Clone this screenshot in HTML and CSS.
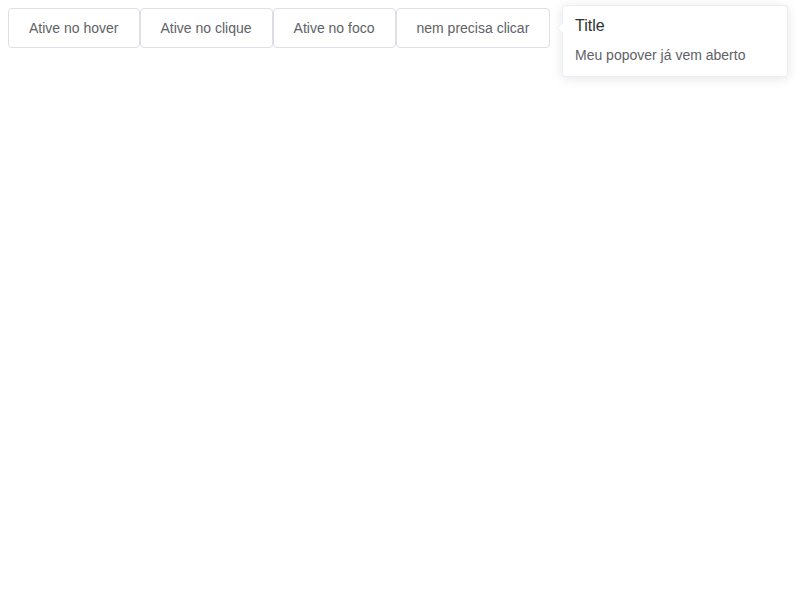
FILE: index.html
```html
<!DOCTYPE html>
<html lang="pt-BR">
<head>
<meta charset="utf-8">
<title>Popover</title>
<link rel="stylesheet" href="styles.css">
</head>
<body>
<div class="bar">
  <button class="btn">Ative no hover</button>
  <button class="btn">Ative no clique</button>
  <button class="btn">Ative no foco</button>
  <button class="btn">nem precisa clicar</button>
</div>
<div class="popover">
  <span class="arrow"></span>
  <div class="title">Title</div>
  <div class="content">Meu popover já vem aberto</div>
</div>
</body>
</html>
```

FILE: styles.css
```css
html, body {
  margin: 0;
  padding: 0;
  background: #fff;
}
body {
  padding: 8px;
  font-family: "Liberation Sans", Arial, Helvetica, sans-serif;
}
.bar {
  display: flex;
  gap: 0;
}
.btn {
  box-sizing: border-box;
  height: 40px;
  padding: 12px 20px;
  font-family: "Liberation Sans", Arial, Helvetica, sans-serif;
  font-size: 14px;
  line-height: 1;
  color: #606266;
  background: #fff;
  border: 1px solid #dcdfe6;
  border-radius: 4px;
  margin: 0;
  cursor: pointer;
}
.popover {
  position: absolute;
  top: 5px;
  left: 562px;
  width: 200px;
  padding: 12px 12px 10px;
  background: #fff;
  border: 1px solid #ebeef5;
  border-radius: 4px;
  box-shadow: 0 2px 12px 0 rgba(0, 0, 0, 0.1);
}
.title {
  font-size: 16px;
  line-height: 1;
  color: #303133;
  margin-bottom: 12px;
}
.content {
  font-size: 14px;
  line-height: 1.4;
  color: #606266;
}
.arrow {
  position: absolute;
  left: -6px;
  top: 16px;
  width: 0;
  height: 0;
  border-style: solid;
  border-width: 6px 6px 6px 0;
  border-color: transparent #ebeef5 transparent transparent;
}
.arrow::after {
  content: "";
  position: absolute;
  left: 1px;
  top: -6px;
  border-style: solid;
  border-width: 6px 6px 6px 0;
  border-color: transparent #fff transparent transparent;
}
```
